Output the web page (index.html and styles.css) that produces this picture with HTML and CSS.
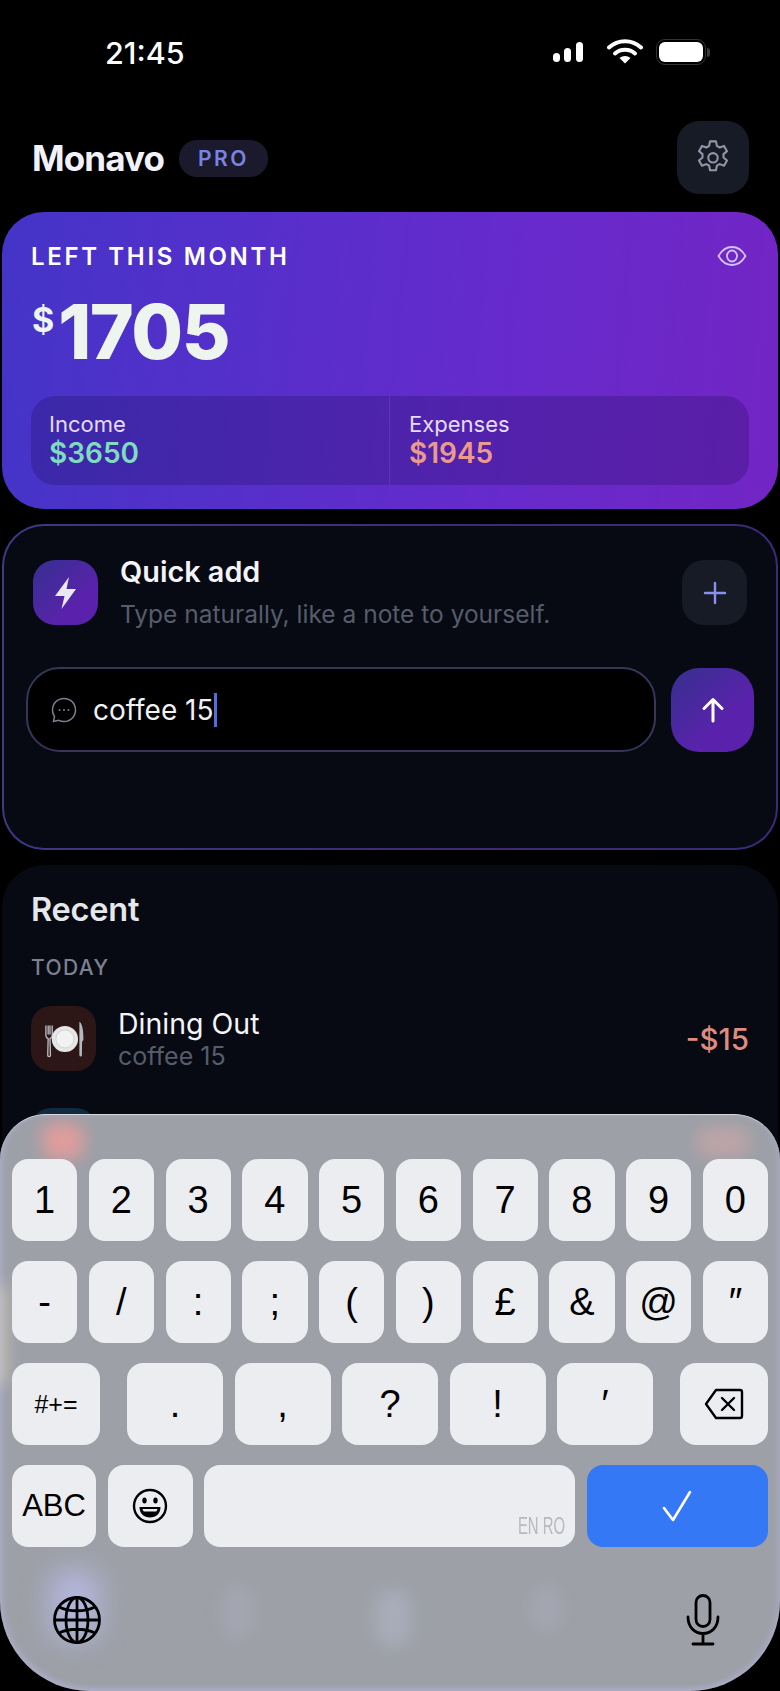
FILE: index.html
```html
<!DOCTYPE html>
<html lang="en">
<head>
<meta charset="utf-8">
<title>Monavo</title>
<link rel="stylesheet" href="styles.css">
</head>
<body>
<div class="phone">
  <div class="status">
    <span class="time">21:45</span>
    <div class="status-icons">
      <svg class="signal" width="32" height="22" viewBox="0 0 32 22"><rect x="1" y="12" width="7" height="9" rx="3.500" fill="#fff"/><rect x="12" y="7" width="7" height="14" rx="3.500" fill="#fff"/><rect x="24" y="1" width="7" height="20" rx="3.500" fill="#fff"/></svg>
      <svg class="wifi" width="36" height="26" viewBox="0 0 36 26" fill="none"><path d="M2 9.500C11 1 25 1 34 9.500" stroke="#fff" stroke-width="4" stroke-linecap="round"/><path d="M8 15.500C13.500 10.500 22.500 10.500 28 15.500" stroke="#fff" stroke-width="4" stroke-linecap="round"/><path d="M12.500 20 18 25.500 23.500 20C20.500 17.300 15.500 17.300 12.500 20Z" fill="#fff"/></svg>
      <div class="battery"><div class="battery-fill"></div></div>
      <div class="battery-nub"></div>
    </div>
  </div>

  <header class="top">
    <div class="brand">
      <span class="logo">Monavo</span>
      <span class="pro">PRO</span>
    </div>
    <button class="settings">
      <svg width="42" height="42" viewBox="0 0 24 24" fill="none" stroke="#8f96a5" stroke-width="1.200" stroke-linejoin="round"><path d="M10.300 2.500h3.400l.5 2.600 1.600.9 2.500-.9 1.700 3-2 1.700v1.900l2 1.700-1.700 3-2.500-.9-1.600.9-.5 2.600h-3.400l-.5-2.600-1.600-.9-2.500.9-1.700-3 2-1.700v-1.900l-2-1.700 1.700-3 2.500.9 1.600-.9z"/><circle cx="12" cy="11.900" r="2.700"/></svg>
    </button>
  </header>

  <section class="hero">
    <div class="hero-head">
      <span class="hero-label">LEFT THIS MONTH</span>
      <svg width="30" height="24" viewBox="0 0 30 24" fill="none" stroke="#d3c2f5" stroke-width="1.800"><path d="M1.500 12C5 6 9.500 3 15 3s10 3 13.500 9C25 18 20.500 21 15 21S5 18 1.500 12Z"/><ellipse cx="15" cy="12" rx="5" ry="5.500"/></svg>
    </div>
    <div class="balance"><span class="currency">$</span><span class="amount">1705</span></div>
    <div class="split">
      <div class="split-cell">
        <span class="split-label">Income</span>
        <span class="split-value income">$3650</span>
      </div>
      <div class="split-cell split-right">
        <span class="split-label">Expenses</span>
        <span class="split-value expense">$1945</span>
      </div>
    </div>
  </section>

  <section class="quick">
    <div class="quick-head">
      <div class="bolt">
        <svg width="26" height="34" viewBox="0 0 26 34"><path d="M16 1 2 20h9.500L8.500 33 23 13H13.500Z" fill="#e9e9f2"/></svg>
      </div>
      <div class="quick-text">
        <span class="quick-title">Quick add</span>
        <span class="quick-sub">Type naturally, like a note to yourself.</span>
      </div>
      <button class="plus">
        <svg width="24" height="24" viewBox="0 0 24 24" stroke="#8b8ff0" stroke-width="2.400" stroke-linecap="round"><path d="M12 2v20M2 12h20"/></svg>
      </button>
    </div>
    <div class="quick-input">
      <div class="field">
        <svg width="26" height="26" viewBox="0 0 26 26" fill="none" stroke="#7d818c" stroke-width="1.500"><path d="M13 1.500C6.500 1.500 1.500 6.500 1.500 13c0 2.500.8 4.800 2 6.500L2.500 24.500l5.300-1.200c1.600.8 3.300 1.200 5.200 1.200 6.500 0 11.500-5 11.500-11.500S19.500 1.500 13 1.500Z"/><circle cx="8.500" cy="13" r="1" fill="#7d818c" stroke="none"/><circle cx="13" cy="13" r="1" fill="#7d818c" stroke="none"/><circle cx="17.500" cy="13" r="1" fill="#7d818c" stroke="none"/></svg>
        <span class="field-text">coffee 15</span><span class="caret"></span>
      </div>
      <button class="send">
        <svg width="24" height="26" viewBox="0 0 24 26" fill="none" stroke="#fff" stroke-width="3" stroke-linecap="round" stroke-linejoin="round"><path d="M12 24V2.500M3 11.500l9-9 9 9"/></svg>
      </button>
    </div>
  </section>

  <section class="recent">
    <h2 class="recent-title">Recent</h2>
    <div class="recent-day">TODAY</div>
    <div class="row">
      <div class="row-icon">
        <svg width="42" height="38" viewBox="0 0 46 42"><path d="M3 6v11c0 2 1.500 3 2.500 3.500L5 39a1.500 1.500 0 0 0 3 0l-.5-18.500C8.500 20 10 19 10 17V6M5.500 6v10M7.500 6v10" fill="none" stroke="#b9bcc2" stroke-width="1.500"/><circle cx="24" cy="21" r="14.500" fill="#e6e6e6"/><circle cx="24" cy="21" r="10" fill="#f2f2f2" stroke="#cfcfcf"/><path d="M40 39V2c3 2 4.500 8 4.500 20l-1.500 2 -.2 15a1.400 1.400 0 0 1-2.800 0Z" fill="#b4b8bd"/></svg>
      </div>
      <div class="row-text">
        <span class="row-name">Dining Out</span>
        <span class="row-note">coffee 15</span>
      </div>
      <span class="row-amount">-$15</span>
    </div>
    <div class="row row-next">
      <div class="row-icon row-icon-blue"></div>
    </div>
  </section>

  <div class="keyboard">
    <i class="blob blob-red"></i>
    <i class="blob blob-pink"></i>
    <i class="blob blob-warm"></i>
    <i class="blob blob-globe"></i>
    <i class="blob blob-b1"></i>
    <i class="blob blob-b2"></i>
    <i class="blob blob-b3"></i>
    <div class="kb-row">
      <span class="key">1</span><span class="key">2</span><span class="key">3</span><span class="key">4</span><span class="key">5</span><span class="key">6</span><span class="key">7</span><span class="key">8</span><span class="key">9</span><span class="key">0</span>
    </div>
    <div class="kb-row">
      <span class="key">-</span><span class="key">/</span><span class="key">:</span><span class="key">;</span><span class="key">(</span><span class="key">)</span><span class="key">£</span><span class="key">&amp;</span><span class="key">@</span><span class="key">″</span>
    </div>
    <div class="kb-row kb-row-3">
      <span class="key key-side key-sym">#+=</span>
      <div class="kb-group">
        <span class="key">.</span><span class="key">,</span><span class="key">?</span><span class="key">!</span><span class="key">′</span>
      </div>
      <span class="key key-side">
        <svg width="40" height="32" viewBox="0 0 40 32" fill="none" stroke="#000" stroke-width="2.400" stroke-linejoin="round" stroke-linecap="round"><path d="M12 2h24a2 2 0 0 1 2 2v24a2 2 0 0 1-2 2H12L2 16Z"/><path d="M18 10l12 12M30 10 18 22"/></svg>
      </span>
    </div>
    <div class="kb-row">
      <span class="key key-abc">ABC</span>
      <span class="key key-emoji">
        <svg width="36" height="36" viewBox="0 0 36 36" fill="none" stroke="#000" stroke-width="2.400"><circle cx="18" cy="18" r="16"/><ellipse cx="12.500" cy="12.500" rx="2.200" ry="3" fill="#000" stroke="none"/><ellipse cx="23.500" cy="12.500" rx="2.200" ry="3" fill="#000" stroke="none"/><path d="M7.500 19h21c0 6.500-4.500 10.500-10.500 10.500S7.500 25.500 7.500 19Z" fill="#000" stroke="none"/><path d="M10.500 21h15c-.5 1.500-1 2.200-1.500 2.500H12c-.5-.3-1-1-1.500-2.500Z" fill="#eceef1" stroke="none"/></svg>
      </span>
      <span class="key key-space"><span class="lang">EN RO</span></span>
      <span class="key key-done">
        <svg width="30" height="32" viewBox="0 0 30 32" fill="none" stroke="#fff" stroke-width="2.600" stroke-linecap="round" stroke-linejoin="round"><path d="M2 18l9 12L28 2"/></svg>
      </span>
    </div>
    <div class="kb-bottom">
      <svg width="50" height="50" viewBox="0 0 50 50" fill="none" stroke="#000" stroke-width="2.800"><circle cx="25" cy="25" r="22.500"/><ellipse cx="25" cy="25" rx="11" ry="22.500"/><path d="M25 2.500v45M2.500 25h45M7 12c10 5 26 5 36 0M7 38c10-5 26-5 36 0"/></svg>
      <svg width="34" height="52" viewBox="0 0 34 52" fill="none" stroke="#000" stroke-width="2.800" stroke-linecap="round"><rect x="10" y="1.500" width="14" height="31" rx="7"/><path d="M2 23c0 10 6.500 16.500 15 16.500S32 33 32 23M17 39.500V49M7 50h20"/></svg>
    </div>
  </div>
</div>
</body>
</html>
```

FILE: styles.css
```css
* { box-sizing: border-box; }
html, body { margin: 0; padding: 0; background: #000; }
body { font-family: Inter, "Liberation Sans", sans-serif; }
button { border: 0; padding: 0; display: flex; align-items: center; justify-content: center; }

.phone { position: relative; width: 780px; height: 1691px; overflow: hidden; background: #000; display: flex; flex-direction: column; }

.status { height: 106px; flex: none; display: flex; align-items: flex-start; justify-content: space-between; padding: 34px 70px 0 105px; }
.time { font-size: 30.500px; line-height: 38px; font-weight: 500; color: #fff; }
.status-icons { display: flex; align-items: center; margin-top: 5px; }
.signal { margin-right: 23px; }
.wifi { margin-right: 13px; margin-top: -2px; }
.battery { width: 50px; height: 26px; border: 1.500px solid #333; border-radius: 9px; padding: 2px; }
.battery-fill { width: 100%; height: 100%; background: #fff; border-radius: 6px; }
.battery-nub { width: 3px; height: 9px; background: #3a3a3a; border-radius: 0 3px 3px 0; margin-left: 1px; }

.top { flex: none; display: flex; justify-content: space-between; align-items: flex-start; padding: 15px 31px 0 32px; height: 106px; }
.brand { display: flex; align-items: center; margin-top: 18px; }
.logo { font-size: 35px; line-height: 38px; font-weight: 700; color: #f1f2fb; letter-spacing: -.9px; }
.pro { margin-left: 15px; width: 89px; height: 37px; border-radius: 18px; background: #1a1a2c; color: #7b83e0; font-size: 21px; font-weight: 600; letter-spacing: 2.600px; display: flex; align-items: center; justify-content: center; }
.settings { width: 72px; height: 73px; border-radius: 22px; background: #171b26; }

.hero { flex: none; margin: 0 2px; height: 297px; border-radius: 42px; background: linear-gradient(95deg, #4434c8 0%, #5a2ecb 40%, #682acc 68%, #7225c4 100%); padding: 28px 29px 24px 29px; display: flex; flex-direction: column; }
.hero-head { display: flex; justify-content: space-between; align-items: center; padding-right: 2px; height: 32px; }
.hero-label { font-size: 24px; font-weight: 600; color: #fff; letter-spacing: 2.650px; white-space: nowrap; }
.balance { display: flex; align-items: flex-start; margin-top: 21px; height: 86px; padding-left: 1px; }
.currency { font-size: 34px; line-height: 44px; font-weight: 700; color: #eef5ef; margin-top: 5px; }
.amount { font-size: 75px; line-height: 78px; font-weight: 800; color: #eef5ef; letter-spacing: -1.500px; margin-left: 4px; }
.split { margin-top: auto; height: 89px; border-radius: 24px; background: rgba(20, 10, 70, .24); display: flex; }
.split-cell { flex: 1; display: flex; flex-direction: column; padding: 14px 18px 0; }
.split-right { border-left: 1.500px solid rgba(120, 70, 210, .45); padding-left: 19px; }
.split-label { font-size: 22px; line-height: 28px; color: #e6dcfb; }
.split-value { font-size: 28px; line-height: 30px; font-weight: 600; }
.income { color: #7fdcc0; }
.expense { color: #ec9a8d; }

.quick { flex: none; margin: 15px 2px 0; height: 326px; border-radius: 42px; border: 2px solid transparent; background: linear-gradient(#070a12, #070a12) padding-box, linear-gradient(100deg, #3d3a84, #3f2a72 60%, #3a2a78) border-box; padding: 34px 22px 0; display: flex; flex-direction: column; }
.quick-head { display: flex; padding: 0 7px 0 7px; }
.bolt { width: 65px; height: 65px; flex: none; border-radius: 22px; background: linear-gradient(135deg, #35308f, #5a22ac 70%); display: flex; align-items: center; justify-content: center; }
.quick-text { flex: 1; margin-left: 22px; display: flex; flex-direction: column; }
.quick-title { font-size: 28.800px; line-height: 28px; margin-top: -2px; font-weight: 600; color: #f3f4f8; }
.quick-sub { font-size: 24.500px; line-height: 30px; margin-top: 13px; color: #565c6a; white-space: nowrap; }
.plus { width: 65px; height: 65px; flex: none; border-radius: 22px; background: #161b26; }
.quick-input { display: flex; margin-top: 38px; }
.field { width: 630px; height: 85px; flex: none; border-radius: 34px; background: #000; border: 2px solid #35365a; display: flex; align-items: center; padding-left: 23px; }
.field-text { margin-left: 16px; font-size: 28px; color: #f1f1f4; line-height: 34px; }
.caret { width: 3px; height: 34px; background: #4f6fe0; margin-left: 0; }
.send { width: 83px; height: 84px; flex: none; margin-left: 15px; margin-top: 1px; border-radius: 28px; background: linear-gradient(135deg, #35308f, #5a22ac 65%); }

.recent { flex: none; margin: 15px 2px 0; height: 400px; border-radius: 42px 42px 0 0; background: #070a12; padding: 26px 29px 0; }
.recent-title { margin: 0; font-size: 32.500px; line-height: 38px; font-weight: 600; color: #e5e7eb; letter-spacing: -.2px; }
.recent-day { margin-top: 27px; font-size: 21px; line-height: 24px; font-weight: 500; color: #7b8190; letter-spacing: 1.400px; }
.row { display: flex; align-items: center; height: 65px; margin-top: 26px; }
.row-next { margin-top: 37px; }
.row-icon { width: 65px; height: 65px; flex: none; border-radius: 20px; background: #2d1616; display: flex; align-items: center; justify-content: center; }
.row-icon-blue { background: #102a40; }
.row-text { flex: 1; margin-left: 22px; display: flex; flex-direction: column; }
.row-name { font-size: 28.500px; line-height: 34px; color: #f4f5f7; }
.row-note { font-size: 25px; line-height: 30px; color: #565c6a; }
.row-amount { font-size: 29.500px; font-weight: 500; color: #e08a80; }

.keyboard { position: absolute; left: 0; right: 0; bottom: 0; height: 577px; background: #9da0a7; border-radius: 46px 46px 90px 90px; border-top: 1.500px solid #d6d8dc; box-shadow: inset 3px -2px 6px rgba(190,190,240,.4), inset -3px -2px 6px rgba(190,190,240,.3); padding: 44px 12px 0; display: flex; flex-direction: column; gap: 20px; overflow: hidden; }
.blob { position: absolute; display: block; filter: blur(8px); border-radius: 14px; }
.blob-red { left: 42px; top: 8px; width: 42px; height: 36px; background: #e09c9c; }
.blob-pink { left: 696px; top: 12px; width: 54px; height: 30px; background: #bda4a8; }
.blob-warm { left: -8px; top: 170px; width: 14px; height: 100px; background: #e8dcc0; opacity: .55; }
.blob-globe { left: 50px; top: 455px; width: 50px; height: 70px; background: #b8bce8; filter: blur(14px); opacity: .8; }
.blob-b1 { left: 222px; top: 470px; width: 32px; height: 54px; background: #a6a9b6; opacity: .7; }
.blob-b2 { left: 375px; top: 475px; width: 36px; height: 56px; background: #aab0be; opacity: .8; }
.blob-b3 { left: 530px; top: 470px; width: 32px; height: 46px; background: #a6a9b6; opacity: .7; }

.kb-row { position: relative; display: flex; gap: 11.500px; height: 82px; flex: none; }
.kb-row-3 { justify-content: space-between; }
.kb-group { display: flex; gap: 11.500px; }
.kb-group .key { width: 96px; flex: none; }
.key { flex: 1; min-width: 0; height: 82px; border-radius: 16px; background: #ebedf0; color: #000; font-family: "Liberation Sans", sans-serif; font-size: 38px; display: flex; align-items: center; justify-content: center; }
.key-side { flex: none; width: 88px; }
.key-sym { font-size: 25px; }
.key-abc { flex: none; width: 84px; font-size: 31px; }
.key-emoji { flex: none; width: 85px; }
.key-space { flex: none; width: 371px; position: relative; }
.key-done { flex: 1; background: #3478f6; }
.lang { position: absolute; right: 10px; bottom: 7px; font-size: 24px; color: #b6b9bd; transform: scaleX(.62); transform-origin: right; white-space: nowrap; }
.kb-bottom { position: relative; display: flex; justify-content: space-between; align-items: center; padding: 0 48px 0 40px; margin-top: 27px; }
```
